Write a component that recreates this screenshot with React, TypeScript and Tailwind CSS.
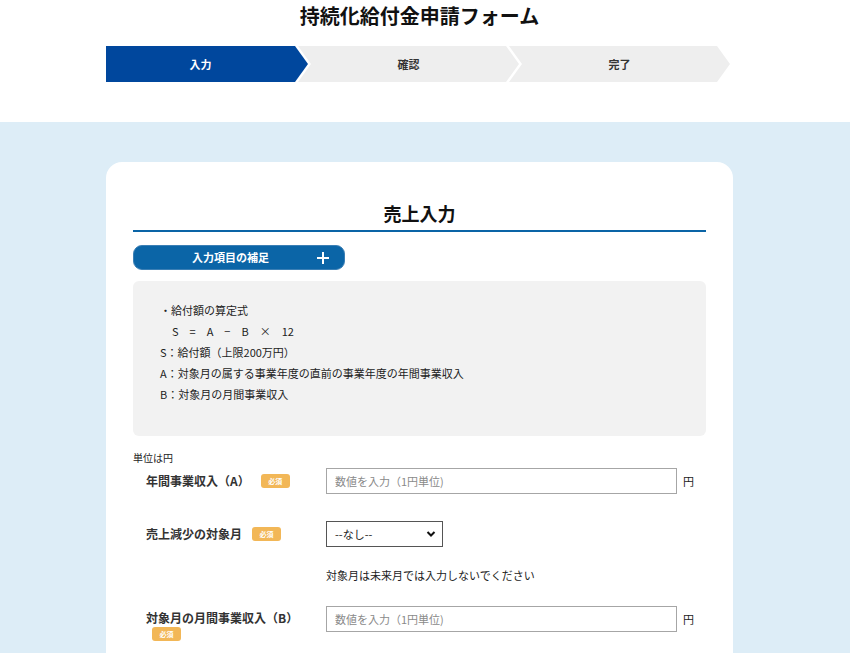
import React from "react";

const font = { fontFamily: '"Noto Sans CJK JP", "Noto Sans", sans-serif' };

function Badge({ className = "" }: { className?: string }) {
  return (
    <span
      className={`inline-flex h-[14px] w-[29px] items-center justify-center rounded-[3px] bg-[#f2b757] text-[7px] font-bold leading-none text-white ${className}`}
    >
      必須
    </span>
  );
}

function NumInput() {
  return (
    <div className="flex items-center">
      <input
        className="h-[26px] w-[351px] border border-[#a6a6a6] bg-white px-[8px] text-[11px] text-[#333] outline-none placeholder:text-[#8a8a8a]"
        placeholder="数値を入力（1円単位)"
        style={font}
      />
      <span className="ml-[6px] text-[11px] text-[#222]">円</span>
    </div>
  );
}

export default function App() {
  return (
    <div className="min-h-[653px] w-full bg-white text-[#222]" style={font}>
      <header className="h-[122px]">
        <div className="ml-[106px] flex w-[627px] flex-col items-center">
          <h1 className="mt-[3px] text-[20px] font-bold leading-[26px] text-[#111]">
            持続化給付金申請フォーム
          </h1>
          <div className="mt-[17px] flex h-[36px] w-[624px] self-start">
            <div className="flex h-full w-[202px] items-center justify-center bg-[#00479d] pr-[13px] text-[11px] font-bold text-white [clip-path:polygon(0_0,calc(100%-13px)_0,100%_50%,calc(100%-13px)_100%,0_100%)]">
              入力
            </div>
            <div className="-ml-[10px] flex h-full w-[221px] items-center justify-center bg-[#eeeeee] pl-[13px] pr-[13px] text-[11px] font-bold text-[#333] [clip-path:polygon(0_0,calc(100%-13px)_0,100%_50%,calc(100%-13px)_100%,0_100%,13px_50%)]">
              確認
            </div>
            <div className="-ml-[10px] flex h-full w-[221px] items-center justify-center bg-[#eeeeee] pl-[13px] pr-[13px] text-[11px] font-bold text-[#333] [clip-path:polygon(0_0,calc(100%-13px)_0,100%_50%,calc(100%-13px)_100%,0_100%,13px_50%)]">
              完了
            </div>
          </div>
        </div>
      </header>

      <section className="min-h-[531px] bg-[#ddedf7] pt-[40px]">
        <div className="ml-[106px] w-[627px] rounded-[16px] bg-white px-[27px] pb-[40px] pt-[38px]">
          <h2 className="border-b-[2px] border-[#0a64a6] pb-[3px] text-center text-[18px] font-bold leading-[27px] text-[#111]">
            売上入力
          </h2>

          <button
            className="relative mt-[13px] flex h-[25px] w-[212px] items-center justify-center rounded-[9px] border border-[#3b7fb5] bg-[#0b65a7] text-[11px] font-bold text-white"
            style={font}
          >
            <span className="-ml-[17px]">入力項目の補足</span>
            <svg
              className="absolute right-[14px] top-1/2 -translate-y-1/2"
              width="14"
              height="14"
              viewBox="0 0 14 14"
            >
              <path d="M7 1v12M1 7h12" stroke="white" strokeWidth="2" />
            </svg>
          </button>

          <div className="mt-[11px] h-[155px] rounded-[6px] bg-[#f2f2f2] pl-[27px] pt-[19px] text-[11px] leading-[21px] text-[#222]">
            <p>・給付額の算定式</p>
            <p className="whitespace-pre pl-[12px]">S　=　A　−　B　×　12</p>
            <p>S：給付額（上限200万円）</p>
            <p>A：対象月の属する事業年度の直前の事業年度の年間事業収入</p>
            <p>B：対象月の月間事業収入</p>
          </div>

          <p className="mt-[15px] text-[10px] leading-[14px] text-[#222]">単位は円</p>

          <div className="mt-[3px] flex items-center">
            <div className="ml-[13px] flex w-[180px] items-center">
              <span className="text-[12px] font-bold text-[#333]">年間事業収入（A）</span>
              <Badge className="ml-[11px]" />
            </div>
            <NumInput />
          </div>

          <div className="mt-[27px] flex items-center">
            <div className="ml-[13px] flex w-[180px] items-center">
              <span className="text-[12px] font-bold text-[#333]">売上減少の対象月</span>
              <Badge className="ml-[10px]" />
            </div>
            <div className="relative h-[26px] w-[117px] border border-[#555] bg-white">
              <span className="absolute left-[8px] top-1/2 -translate-y-1/2 text-[11px] text-[#222]">
                --なし--
              </span>
              <svg
                className="absolute right-[6px] top-1/2 -translate-y-1/2"
                width="10"
                height="8"
                viewBox="0 0 10 8"
              >
                <path d="M1.5 2l3.5 3.5L8.5 2" fill="none" stroke="#111" strokeWidth="2" />
              </svg>
            </div>
          </div>

          <p className="ml-[193px] mt-[19px] text-[11px] leading-[18px] text-[#222]">
            対象月は未来月では入力しないでください
          </p>

          <div className="mt-[22px] flex items-start">
            <div className="ml-[13px] flex w-[180px] flex-col items-start">
              <div className="mt-[5px] text-[12px] font-bold leading-[14px] text-[#333]">
                対象月の月間事業収入（B）
              </div>
              <Badge className="ml-[6px] mt-[2px]" />
            </div>
            <NumInput />
          </div>
        </div>
      </section>
    </div>
  );
}
